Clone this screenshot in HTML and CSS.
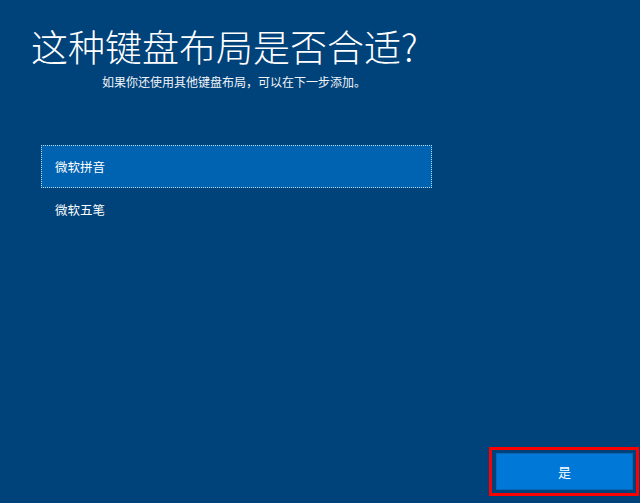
FILE: index.html
```html
<!DOCTYPE html>
<html lang="zh-CN">
<head>
<meta charset="utf-8">
<title>键盘布局</title>
<link rel="stylesheet" href="styles.css">
</head>
<body>
<div class="page">
  <main class="main">
    <header class="header">
      <h1 class="title">这种键盘布局是否合适?</h1>
      <p class="subtitle">如果你还使用其他键盘布局，可以在下一步添加。</p>
    </header>
    <ul class="list">
      <li class="item selected">微软拼音</li>
      <li class="item">微软五笔</li>
    </ul>
  </main>
  <footer class="footer">
    <div class="highlight">
      <button class="btn">是</button>
    </div>
  </footer>
</div>
</body>
</html>
```
FILE: styles.css
```css
html, body {
  margin: 0;
  padding: 0;
}
body {
  background: #00427a;
  color: #ffffff;
  font-family: "Noto Sans CJK SC", "Noto Sans", sans-serif;
}
.page {
  height: 503px;
  display: flex;
  flex-direction: column;
  overflow: hidden;
}
.main {
  flex: 1;
}
.header {
  padding: 24px 0 0 31px;
}
.title {
  margin: 0;
  font-size: 37px;
  line-height: 44px;
  font-weight: 300;
  letter-spacing: 0;
}
.subtitle {
  margin: 6px 0 0 71px;
  font-size: 12px;
  line-height: 16px;
  color: #f2f5f8;
}
.list {
  list-style: none;
  margin: 55px 0 0 41px;
  padding: 0;
  width: 391px;
}
.item {
  height: 43px;
  box-sizing: border-box;
  padding-left: 14px;
  display: flex;
  align-items: center;
  font-size: 12.5px;
  color: #ffffff;
}
.item.selected {
  background: #0063b1;
  border: 1px dotted rgba(255, 255, 255, 0.75);
  padding-left: 13px;
}
.footer {
  display: flex;
  justify-content: flex-end;
  padding: 0 1px 7px 0;
}
.highlight {
  border: 3px solid #ff0000;
  padding: 3px 3px 3px 4px;
  width: 137px;
}
.btn {
  display: block;
  width: 137px;
  height: 37px;
  margin: 0;
  background: #0078d7;
  border: 1px solid #0b66b8;
  color: #ffffff;
  font-family: "Noto Sans CJK SC", "Noto Sans", sans-serif;
  font-size: 13px;
  padding: 0;
}
```
